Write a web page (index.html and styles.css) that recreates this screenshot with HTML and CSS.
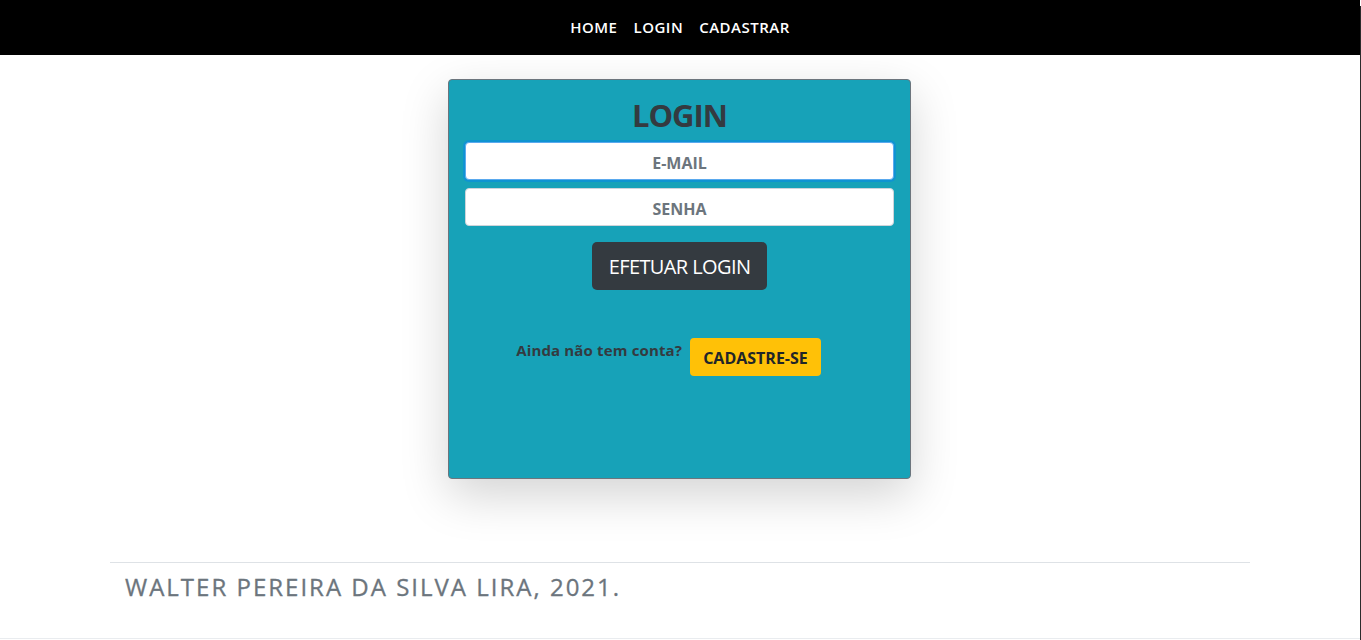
FILE: index.html
```html
<!DOCTYPE html>
<html lang="pt-BR">
<head>
<meta charset="utf-8">
<title>Login</title>
<link rel="stylesheet" href="styles.css">
</head>
<body>
<div class="page">
<header class="topbar">
  <nav class="nav">
    <a class="nav-link" href="#">HOME</a>
    <a class="nav-link" href="#">LOGIN</a>
    <a class="nav-link" href="#">CADASTRAR</a>
  </nav>
</header>
<main class="main">
  <section class="card">
    <h2 class="card-title">LOGIN</h2>
    <input class="field field-focus" type="text" placeholder="E-MAIL">
    <input class="field" type="password" placeholder="SENHA">
    <div class="actions">
      <button class="btn btn-dark">EFETUAR LOGIN</button>
    </div>
    <div class="signup">
      <span class="signup-label">Ainda não tem conta?</span>
      <button class="btn btn-warning">CADASTRE-SE</button>
    </div>
  </section>
</main>
<footer class="footer">
  <hr class="footer-rule">
  <h4 class="footer-text">WALTER PEREIRA DA SILVA LIRA, 2021.</h4>
</footer>
</div>
<div class="frame-edge"></div>
</body>
</html>
```
FILE: styles.css
```css
* { box-sizing: border-box; }
html, body { margin: 0; padding: 0; }
body {
  font-family: "Open Sans", "Liberation Sans", sans-serif;
  color: #212529;
  background: #fff;
}
.page {
  width: 1360px;
  border-bottom: 1px solid #e9ecef;
}
.frame-edge {
  position: fixed;
  top: 6px;
  right: 0;
  bottom: 0;
  width: 1px;
  background: #2b2b2b;
}
.topbar {
  background: #000;
  height: 55px;
  display: flex;
  align-items: center;
  justify-content: center;
}
.nav { display: flex; }
.nav-link {
  color: #fff;
  text-decoration: none;
  font-size: 15px;
  font-weight: 600;
  padding: 0 8px;
  letter-spacing: 0.5px;
  line-height: 20px;
  margin-top: -1px;
}
.main {
  padding: 24px 1px 0 0;
  display: flex;
  justify-content: center;
}
.card {
  width: 463px;
  height: 400px;
  background: #17a2b8;
  border: 1px solid #6c757d;
  border-radius: 4px;
  box-shadow: 0 16px 48px rgba(0,0,0,0.175);
  padding: 16px;
  display: flex;
  flex-direction: column;
}
.card-title {
  margin: 0 0 8px;
  font-size: 31px;
  line-height: 38px;
  font-weight: 700;
  color: #343a40;
  text-align: center;
  letter-spacing: -1px;
}
.field {
  display: block;
  width: 100%;
  height: 38px;
  margin: 0 0 8px;
  padding: 3px 12px 0;
  border: 1px solid #ced4da;
  border-radius: 4px;
  background: #fff;
  text-align: center;
  font-family: inherit;
  font-size: 16px;
  font-weight: 700;
  color: #495057;
  outline: none;
}
.field::placeholder { color: #6c757d; opacity: 1; }
.field-focus {
  border-color: #5aa9ee;
  box-shadow: 0 0 0 2px rgba(0,123,255,0.35);
}
.actions {
  display: flex;
  justify-content: center;
  margin-top: 8px;
}
.btn {
  font-family: inherit;
  border: 1px solid transparent;
  cursor: pointer;
}
.btn-dark {
  background: #343a40;
  color: #fff;
  font-size: 20px;
  line-height: 30px;
  padding: 9px 16px 7px;
  border-radius: 5px;
  letter-spacing: -0.6px;
}
.signup {
  margin-top: 48px;
  display: flex;
  align-items: flex-start;
  justify-content: center;
  gap: 8px;
  padding-right: 22px;
}
.signup-label {
  font-size: 15px;
  font-weight: 700;
  line-height: 24px;
  color: #343a40;
  letter-spacing: 0.15px;
}
.btn-warning {
  background: #ffc107;
  color: #212529;
  font-size: 16px;
  font-weight: 700;
  line-height: 24px;
  padding: 7px 12px 5px;
  border-radius: 4px;
}
.footer {
  width: 1140px;
  margin: 83px auto 0;
  padding-bottom: 37px;
}
.footer-rule {
  margin: 0 0 9px;
  border: 0;
  border-top: 1px solid #dee2e6;
}
.footer-text {
  margin: 0;
  padding: 0 15px;
  font-size: 24px;
  line-height: 29px;
  font-weight: 500;
  color: #6c757d;
  letter-spacing: 2px;
  -webkit-text-stroke: 0.3px #6c757d;
}
```
